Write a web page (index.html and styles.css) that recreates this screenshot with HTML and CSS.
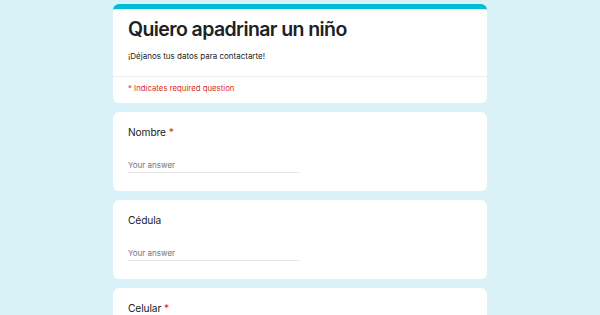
FILE: index.html
```html
<!DOCTYPE html>
<html lang="es">
  <head>
    <meta charset="UTF-8" />
    <meta name="viewport" content="width=device-width, initial-scale=1.0" />
    <title>Quiero apadrinar un niño</title>
    <link rel="stylesheet" href="styles.css">
  </head>
  <body>
    <div class="form">
      <div class="card header-card">
        <div class="header-top">
          <h1>Quiero apadrinar un niño</h1>
          <p class="description">¡Déjanos tus datos para contactarte!</p>
        </div>
        <div class="required-note">* Indicates required question</div>
      </div>

      <div class="card question">
        <label class="label">Nombre <span class="star">*</span></label>
        <input class="answer" type="text" placeholder="Your answer" />
      </div>

      <div class="card question">
        <label class="label">Cédula</label>
        <input class="answer" type="text" placeholder="Your answer" />
      </div>

      <div class="card question">
        <label class="label">Celular <span class="star">*</span></label>
        <input class="answer" type="text" placeholder="Your answer" />
      </div>
    </div>
  </body>
</html>
```

FILE: styles.css
```css
* {
  margin: 0;
  padding: 0;
  box-sizing: border-box;
  font-family: Inter, "Open Sans", sans-serif;
}

body {
  background-color: #d9f2f8;
  padding-top: 4px;
}

.form {
  width: 374px;
  margin: 0 auto;
  display: flex;
  flex-direction: column;
  gap: 9px;
}

.card {
  background-color: white;
  border-radius: 6px;
}

.header-card {
  border-top: 5px solid #00bcd4;
}

.header-top {
  padding: 7px 15px 14px;
  border-bottom: 1px solid #ececec;
}

h1 {
  font-size: 19.5px;
  line-height: 26px;
  font-weight: 600;
  color: #202124;
  letter-spacing: -0.6px;
}

.description {
  margin-top: 8px;
  font-size: 8px;
  line-height: 12px;
  color: #202124;
}

.required-note {
  padding: 5px 15px 9px;
  font-size: 7.8px;
  line-height: 12px;
  color: #d93025;
}

.question {
  padding: 13px 15px 18px;
  display: flex;
  flex-direction: column;
  align-items: flex-start;
}

.label {
  font-size: 10.2px;
  line-height: 14px;
  color: #202124;
  letter-spacing: -0.1px;
}

.star {
  color: #d93025;
}

.answer {
  margin-top: 18px;
  width: 172px;
  height: 16px;
  border: none;
  border-bottom: 1px solid #e6e6e6;
  font-size: 8px;
  color: #202124;
  outline: none;
  background: transparent;
}

.answer::placeholder {
  color: #70757a;
}
```
